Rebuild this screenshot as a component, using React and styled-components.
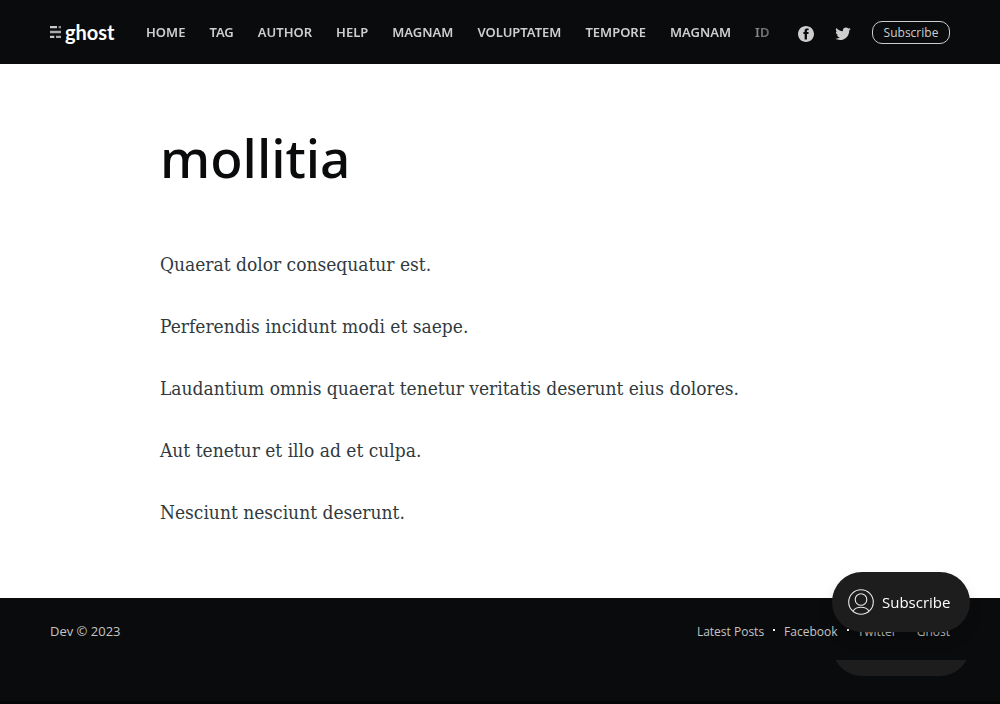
import React from "react";
import styled, { createGlobalStyle } from "styled-components";

const GlobalStyle = createGlobalStyle`
  *, *::before, *::after { box-sizing: border-box; }
  body {
    margin: 0;
    background: #fff;
    color: #15171a;
    font-family: "Segoe UI", "Open Sans", "Noto Sans", sans-serif;
  }
  a { color: inherit; text-decoration: none; }
`;

const Page = styled.div`
  min-height: 100vh;
  display: flex;
  flex-direction: column;
`;

const Header = styled.header`
  background: #0a0b0c;
  color: #fff;
  padding: 0 50px;
`;

const HeaderInner = styled.div`
  max-width: 1040px;
  height: 64px;
  margin: 0 auto;
  display: flex;
  align-items: center;
`;

const Logo = styled.a`
  display: flex;
  align-items: center;
  gap: 4px;
  width: 64px;
  height: 28px;
  margin-right: 32px;
  flex: none;
  font-family: Lato, sans-serif;
  font-size: 20px;
  line-height: 24px;
  font-weight: 700;

  svg { flex: none; }
`;

const Nav = styled.nav`
  flex: 1;
  min-width: 0;
  overflow: hidden;
  mask-image: linear-gradient(to right, #000 calc(100% - 64px), transparent);
`;

const NavList = styled.ul`
  display: flex;
  gap: 24px;
  margin: 0;
  padding: 0;
  list-style: none;
`;

const NavLink = styled.a`
  display: block;
  color: #cecece;
  font-family: "Noto Sans", "Open Sans", sans-serif;
  font-size: 13px;
  line-height: 20px;
  font-weight: 600;
  text-transform: uppercase;
  white-space: nowrap;
`;

const Actions = styled.div`
  display: flex;
  align-items: center;
  flex: none;
  color: #cecece;
`;

const SocialLink = styled.a`
  display: flex;
  margin-right: 21px;
  padding-top: 3px;

  svg { width: 16px; height: 16px; fill: currentColor; }
`;

const SubscribeButton = styled.button`
  width: 78px;
  height: 23px;
  padding: 2px 0 0;
  border: 1px solid #cecece;
  border-radius: 10px;
  background: transparent;
  color: #cecece;
  font-family: inherit;
  font-size: 12px;
  line-height: 18px;
  cursor: pointer;
`;

const Main = styled.main`
  flex: 1;
  padding: 59px 50px 0;
`;

const Article = styled.article`
  max-width: 680px;
  margin: 0 auto;
`;

const Title = styled.h1`
  margin: 0 0 55px;
  color: #0a0b0c;
  font-family: "Noto Sans", "Open Sans", sans-serif;
  font-size: 53px;
  line-height: 70px;
  font-weight: 500;
`;

const Paragraph = styled.p`
  margin: 0 0 30px;
  color: #303a3e;
  font-family: Georgia, "DejaVu Serif Condensed", "DejaVu Serif", serif;
  font-size: 19px;
  line-height: 32px;
`;

const Footer = styled.footer`
  min-height: 106px;
  padding: 22px 50px 0;
  background: #0a0b0c;
  border-bottom: 3px solid #050505;
  color: #c4c5c6;
  font-size: 13px;
  line-height: 22px;
`;

const FooterInner = styled.div`
  max-width: 1040px;
  margin: 0 auto;
  display: flex;
  align-items: baseline;
  justify-content: space-between;
`;

const FooterNav = styled.nav`
  display: flex;
  font-size: 12px;

  a + a::before {
    content: "";
    display: inline-block;
    width: 2px;
    height: 2px;
    margin: 0 9px;
    background: #fff;
    vertical-align: 5px;
  }
`;

const Portal = styled.button`
  position: fixed;
  right: 30px;
  bottom: 72px;
  width: 138px;
  height: 60px;
  padding: 0 0 0 16px;
  display: flex;
  align-items: center;
  gap: 8px;
  border: 0;
  border-radius: 30px;
  background: #1d1d1d;
  box-shadow: 0 8px 16px -4px rgba(0, 0, 0, 0.25);
  color: #fff;
  font-family: inherit;
  font-size: 15px;
  cursor: pointer;

  svg { width: 26px; height: 26px; flex: none; }
`;

const PortalEcho = styled.div`
  position: fixed;
  right: 30px;
  bottom: 28px;
  width: 138px;
  height: 16px;
  overflow: hidden;

  &::before {
    content: "";
    display: block;
    height: 60px;
    margin-top: -44px;
    border-radius: 30px;
    background: #1d1d1d;
  }
`;

const navItems = ["Home", "Tag", "Author", "Help", "magnam", "voluptatem", "tempore", "magnam", "id"];
const paragraphs = [
  "Quaerat dolor consequatur est.",
  "Perferendis incidunt modi et saepe.",
  "Laudantium omnis quaerat tenetur veritatis deserunt eius dolores.",
  "Aut tenetur et illo ad et culpa.",
  "Nesciunt nesciunt deserunt.",
];
const footerLinks = ["Latest Posts", "Facebook", "Twitter", "Ghost"];

const GhostMark = () => (
  <svg width="11" height="12" viewBox="0 0 11 12" aria-hidden="true">
    <path d="M0 0h7v2.3H0zM0 9.7h4.3V12H0z" fill="#c6c8ca" />
    <path d="M0 4.8h11v2.4H0zM6 9.7h5V12H6z" fill="#a9abad" />
    <path d="M8.6 0H11v2.3H8.6z" fill="#8c8e90" />
  </svg>
);

const FacebookIcon = () => (
  <svg viewBox="0 0 32 32" aria-hidden="true">
    <path d="M16 0c8.837 0 16 7.163 16 16s-7.163 16-16 16S0 24.837 0 16 7.163 0 16 0zm5.204 4.911h-3.546c-2.103 0-4.443.885-4.443 3.934.01 1.062 0 2.08 0 3.225h-2.433v3.872h2.509v11.147h4.61v-11.22h3.042l.275-3.81h-3.397s.007-1.695 0-2.187c0-1.205 1.253-1.136 1.329-1.136h2.054V4.911z" />
  </svg>
);

const TwitterIcon = () => (
  <svg viewBox="1.5 2 29 29" aria-hidden="true">
    <path d="M30.063 7.313c-.813 1.125-1.75 2.125-2.875 2.938v.75c0 1.563-.188 3.125-.688 4.625a15.088 15.088 0 0 1-2.063 4.438c-.875 1.438-2 2.688-3.25 3.813a15.015 15.015 0 0 1-4.625 2.563c-1.813.688-3.75 1-5.75 1-3.25 0-6.188-.875-8.875-2.625.438.063.875.125 1.375.125 2.688 0 5.063-.875 7.188-2.5-1.25 0-2.375-.375-3.375-1.125s-1.688-1.688-2.063-2.875c.438.063.813.125 1.125.125.5 0 1-.063 1.5-.25-1.313-.25-2.438-.938-3.313-1.938a5.673 5.673 0 0 1-1.313-3.688v-.063c.813.438 1.688.688 2.625.688a5.228 5.228 0 0 1-1.875-2c-.5-.875-.688-1.813-.688-2.75 0-1.063.25-2.063.75-2.938 1.438 1.75 3.188 3.188 5.25 4.25s4.313 1.688 6.688 1.813a5.579 5.579 0 0 1 1.5-5.438c1.125-1.125 2.5-1.688 4.125-1.688s3.063.625 4.188 1.813a11.48 11.48 0 0 0 3.688-1.375c-.438 1.375-1.313 2.438-2.563 3.188 1.125-.125 2.188-.438 3.313-.875z" />
  </svg>
);

const UserIcon = () => (
  <svg viewBox="0 0 26 26" fill="none" stroke="#e8e8e8" strokeWidth="1.1" aria-hidden="true">
    <circle cx="13" cy="13" r="12.3" />
    <circle cx="13" cy="10.5" r="5.8" />
    <path d="M5 22c2-3 5-3.7 8-3.7s6 .7 8 3.7" />
  </svg>
);

export default function App() {
  return (
    <Page>
      <GlobalStyle />
      <Header>
        <HeaderInner>
          <Logo href="#"><GhostMark />ghost</Logo>
          <Nav>
            <NavList>
              {navItems.map((item, i) => (
                <li key={i}><NavLink href="#">{item}</NavLink></li>
              ))}
            </NavList>
          </Nav>
          <Actions>
            <SocialLink href="#" aria-label="Facebook"><FacebookIcon /></SocialLink>
            <SocialLink href="#" aria-label="Twitter"><TwitterIcon /></SocialLink>
            <SubscribeButton type="button">Subscribe</SubscribeButton>
          </Actions>
        </HeaderInner>
      </Header>
      <Main>
        <Article>
          <Title>mollitia</Title>
          {paragraphs.map((text) => <Paragraph key={text}>{text}</Paragraph>)}
        </Article>
      </Main>
      <Footer>
        <FooterInner>
          <section><a href="#">Dev</a> © 2023</section>
          <FooterNav>
            {footerLinks.map((link) => <a href="#" key={link}>{link}</a>)}
          </FooterNav>
        </FooterInner>
      </Footer>
      <PortalEcho aria-hidden="true" />
      <Portal type="button"><UserIcon />Subscribe</Portal>
    </Page>
  );
}
